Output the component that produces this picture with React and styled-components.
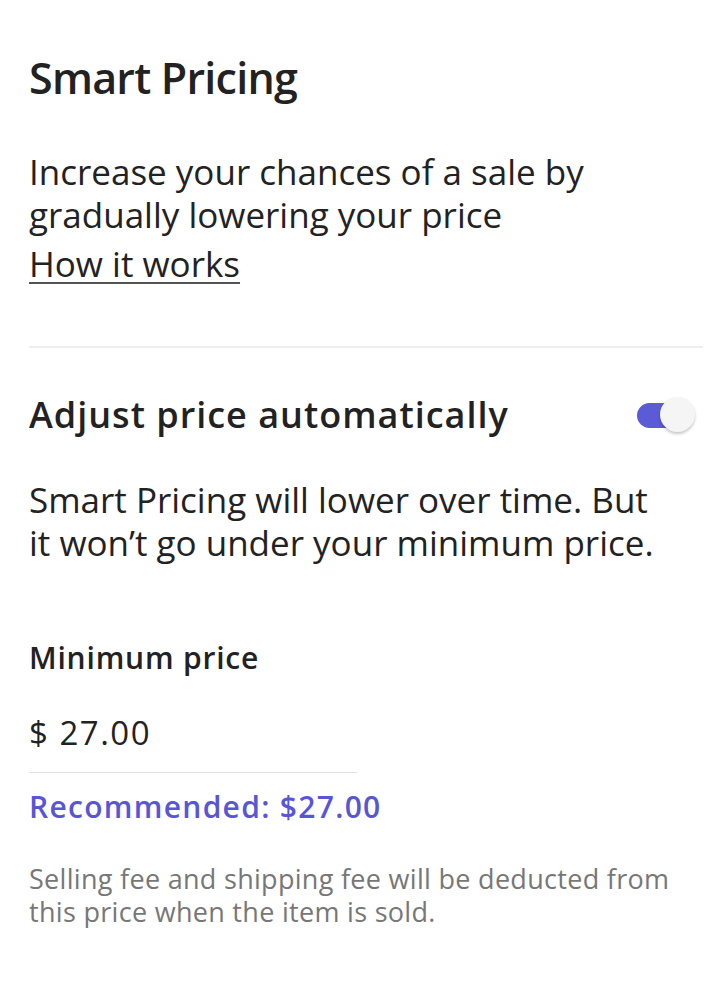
import React, { useState } from "react";
import styled, { createGlobalStyle } from "styled-components";

const GlobalStyle = createGlobalStyle`
    body {
        margin: 0;
        background: #ffffff;
        font-family: "Open Sans", "Noto Sans", sans-serif;
        color: #222222;
    }
`;

const Page = styled.div`
    padding: 52px 17px 0 29px;
`;

const Title = styled.h1`
    margin: 0;
    font-size: 43px;
    font-weight: 600;
    letter-spacing: -0.75px;
    line-height: 52px;
    color: #222;
`;

const Body = styled.p`
    margin: ${(p) => p.$top || 0}px 0 0;
    max-width: 640px;
    font-size: 35px;
    line-height: 43px;
    font-weight: 400;
    color: #222;
`;

const Link = styled.a`
    display: block;
    width: fit-content;
    margin-top: 3px;
    font-size: 35px;
    line-height: 50px;
    color: #222;
    text-decoration: underline;
    text-decoration-color: #555;
    text-underline-offset: 5px;
    text-decoration-thickness: 1.5px;
`;

const Divider = styled.hr`
    margin: 57px 0 0;
    border: 0;
    border-top: 2px solid #eeeeee;
`;

const Row = styled.div`
    display: flex;
    align-items: center;
    justify-content: space-between;
    margin-top: 43px;
`;

const Heading = styled.h2`
    margin: 0;
    font-size: 36px;
    font-weight: 600;
    letter-spacing: 1px;
    line-height: 48px;
    color: #222;
`;

const Switch = styled.button`
    position: relative;
    flex: none;
    width: 62px;
    height: 40px;
    margin-right: 6px;
    padding: 0;
    border: 0;
    background: transparent;
    cursor: pointer;
`;

const Track = styled.span`
    position: absolute;
    left: 2px;
    top: 8px;
    width: 50px;
    height: 25px;
    border-radius: 13px;
    background: ${(p) => (p.$on ? "#5b5bd8" : "#cccccc")};
`;

const Knob = styled.span`
    position: absolute;
    top: 2px;
    left: ${(p) => (p.$on ? "25px" : "0")};
    width: 35px;
    height: 35px;
    border-radius: 50%;
    background: #f5f5f5;
    box-shadow: 0 2px 3px rgba(0, 0, 0, 0.22);
`;

const Label = styled.div`
    margin-top: 74px;
    font-size: 30px;
    font-weight: 600;
    letter-spacing: 0.8px;
    line-height: 40px;
    color: #222;
`;

const PriceField = styled.div`
    width: 328px;
    margin-top: 33px;
    padding-bottom: 17px;
    border-bottom: 1.5px solid #e2e2e2;
    font-size: 33px;
    letter-spacing: 1.5px;
    line-height: 44px;
    color: #222;
`;

const Recommended = styled.div`
    margin-top: 14px;
    font-size: 30px;
    font-weight: 600;
    letter-spacing: 1.3px;
    color: #5856d6;
    line-height: 40px;
`;

const FinePrint = styled.p`
    margin: 35px 0 0;
    max-width: 660px;
    font-size: 27px;
    letter-spacing: 0.3px;
    line-height: 33px;
    color: #777;
`;

export default function App() {
    const [on, setOn] = useState(true);

    return (
        <Page>
            <GlobalStyle />
            <Title>Smart Pricing</Title>
            <Body $top={46}>
                Increase your chances of a sale by gradually lowering your price
            </Body>
            <Link href="#">How it works</Link>
            <Divider />
            <Row>
                <Heading>Adjust price automatically</Heading>
                <Switch onClick={() => setOn(!on)} aria-label="Adjust price automatically">
                    <Track $on={on} />
                    <Knob $on={on} />
                </Switch>
            </Row>
            <Body $top={39}>
                Smart Pricing will lower over time. But it won’t go under your minimum price.
            </Body>
            <Label>Minimum price</Label>
            <PriceField>$ 27.00</PriceField>
            <Recommended>Recommended: $27.00</Recommended>
            <FinePrint>
                Selling fee and shipping fee will be deducted from this price when the item is sold.
            </FinePrint>
        </Page>
    );
}
